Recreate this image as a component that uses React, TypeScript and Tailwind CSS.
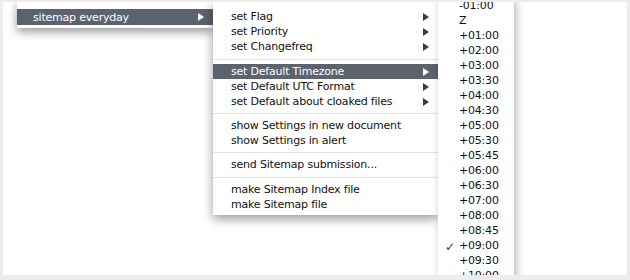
import React from "react";

type Entry = { label: string; sub?: boolean; active?: boolean } | "sep";

const mainItems: Entry[] = [
  { label: "set Flag", sub: true },
  { label: "set Priority", sub: true },
  { label: "set Changefreq", sub: true },
  "sep",
  { label: "set Default Timezone", sub: true, active: true },
  { label: "set Default UTC Format", sub: true },
  { label: "set Default about cloaked files", sub: true },
  "sep",
  { label: "show Settings in new document" },
  { label: "show Settings in alert" },
  "sep",
  { label: "send Sitemap submission..." },
  "sep",
  { label: "make Sitemap Index file" },
  { label: "make Sitemap file" },
];

const zones = [
  "-01:00", "Z", "+01:00", "+02:00", "+03:00", "+03:30", "+04:00", "+04:30",
  "+05:00", "+05:30", "+05:45", "+06:00", "+06:30", "+07:00", "+08:00",
  "+08:45", "+09:00", "+09:30", "+10:00", "+10:30",
];

function Arrow({ light }: { light?: boolean }) {
  return (
    <svg width="6" height="8" viewBox="0 0 6 8" className="shrink-0">
      <polygon points="0,0 6,4 0,8" fill={light ? "#ffffff" : "#3c3c3c"} />
    </svg>
  );
}

const font = "font-['DejaVu_Sans',sans-serif] text-[11px] tracking-[-0.2px]";

export default function App() {
  // separator heights measured from the screenshot
  const sepHeights = [10, 9, 9, 10];
  let sepIndex = 0;

  return (
    <div className="w-[630px] h-[280px] bg-[#ececec] pt-[2px] pl-[3px] pr-[3px] pb-[5px]">
      <div className={`relative w-full h-full bg-white overflow-hidden ${font}`}>
        {/* parent menu */}
        <div className="absolute left-[14px] top-[-2px] w-[196px] bg-white pt-[9px] pb-[3px] shadow-[0_4px_10px_rgba(0,0,0,0.4)]">
          <div className="h-[16px] flex items-center justify-between pl-[16px] pr-[9px] bg-[#5c626e] text-white">
            <span className="pt-[2px]">sitemap everyday</span>
            <Arrow light />
          </div>
        </div>

        {/* sitemap submenu */}
        <div className="absolute left-[210px] top-0 w-[225px] bg-white pt-[7px] pb-[3px] shadow-[0_4px_10px_rgba(0,0,0,0.4)] z-10">
          {mainItems.map((it, i) => {
            if (it === "sep") {
              const h = sepHeights[sepIndex++];
              return (
                <div key={i} className="flex items-center" style={{ height: h }}>
                  <div className="w-full h-px bg-[#e3e3e3]" />
                </div>
              );
            }
            return (
              <div
                key={i}
                className={`h-[15px] flex items-center justify-between pl-[18px] pr-[9px] ${
                  it.active ? "bg-[#5c626e] text-white" : "text-[#111]"
                }`}
              >
                <span className="pt-[2px]">{it.label}</span>
                {it.sub && <Arrow light={it.active} />}
              </div>
            );
          })}
        </div>

        {/* timezone submenu */}
        <div className="absolute left-[435px] top-[-4px] w-[76px] bg-white shadow-[2px_2px_8px_rgba(0,0,0,0.3)] z-20">
          {zones.map((z) => (
            <div key={z} className="h-[15px] flex items-center text-[#111]">
              <span className="w-[21px] pl-[7px] pt-[2px] text-[12px] text-[#333]">{z === "+09:00" ? "✓" : ""}</span>
              <span className="pt-[2px]">{z}</span>
            </div>
          ))}
        </div>
      </div>
    </div>
  );
}
